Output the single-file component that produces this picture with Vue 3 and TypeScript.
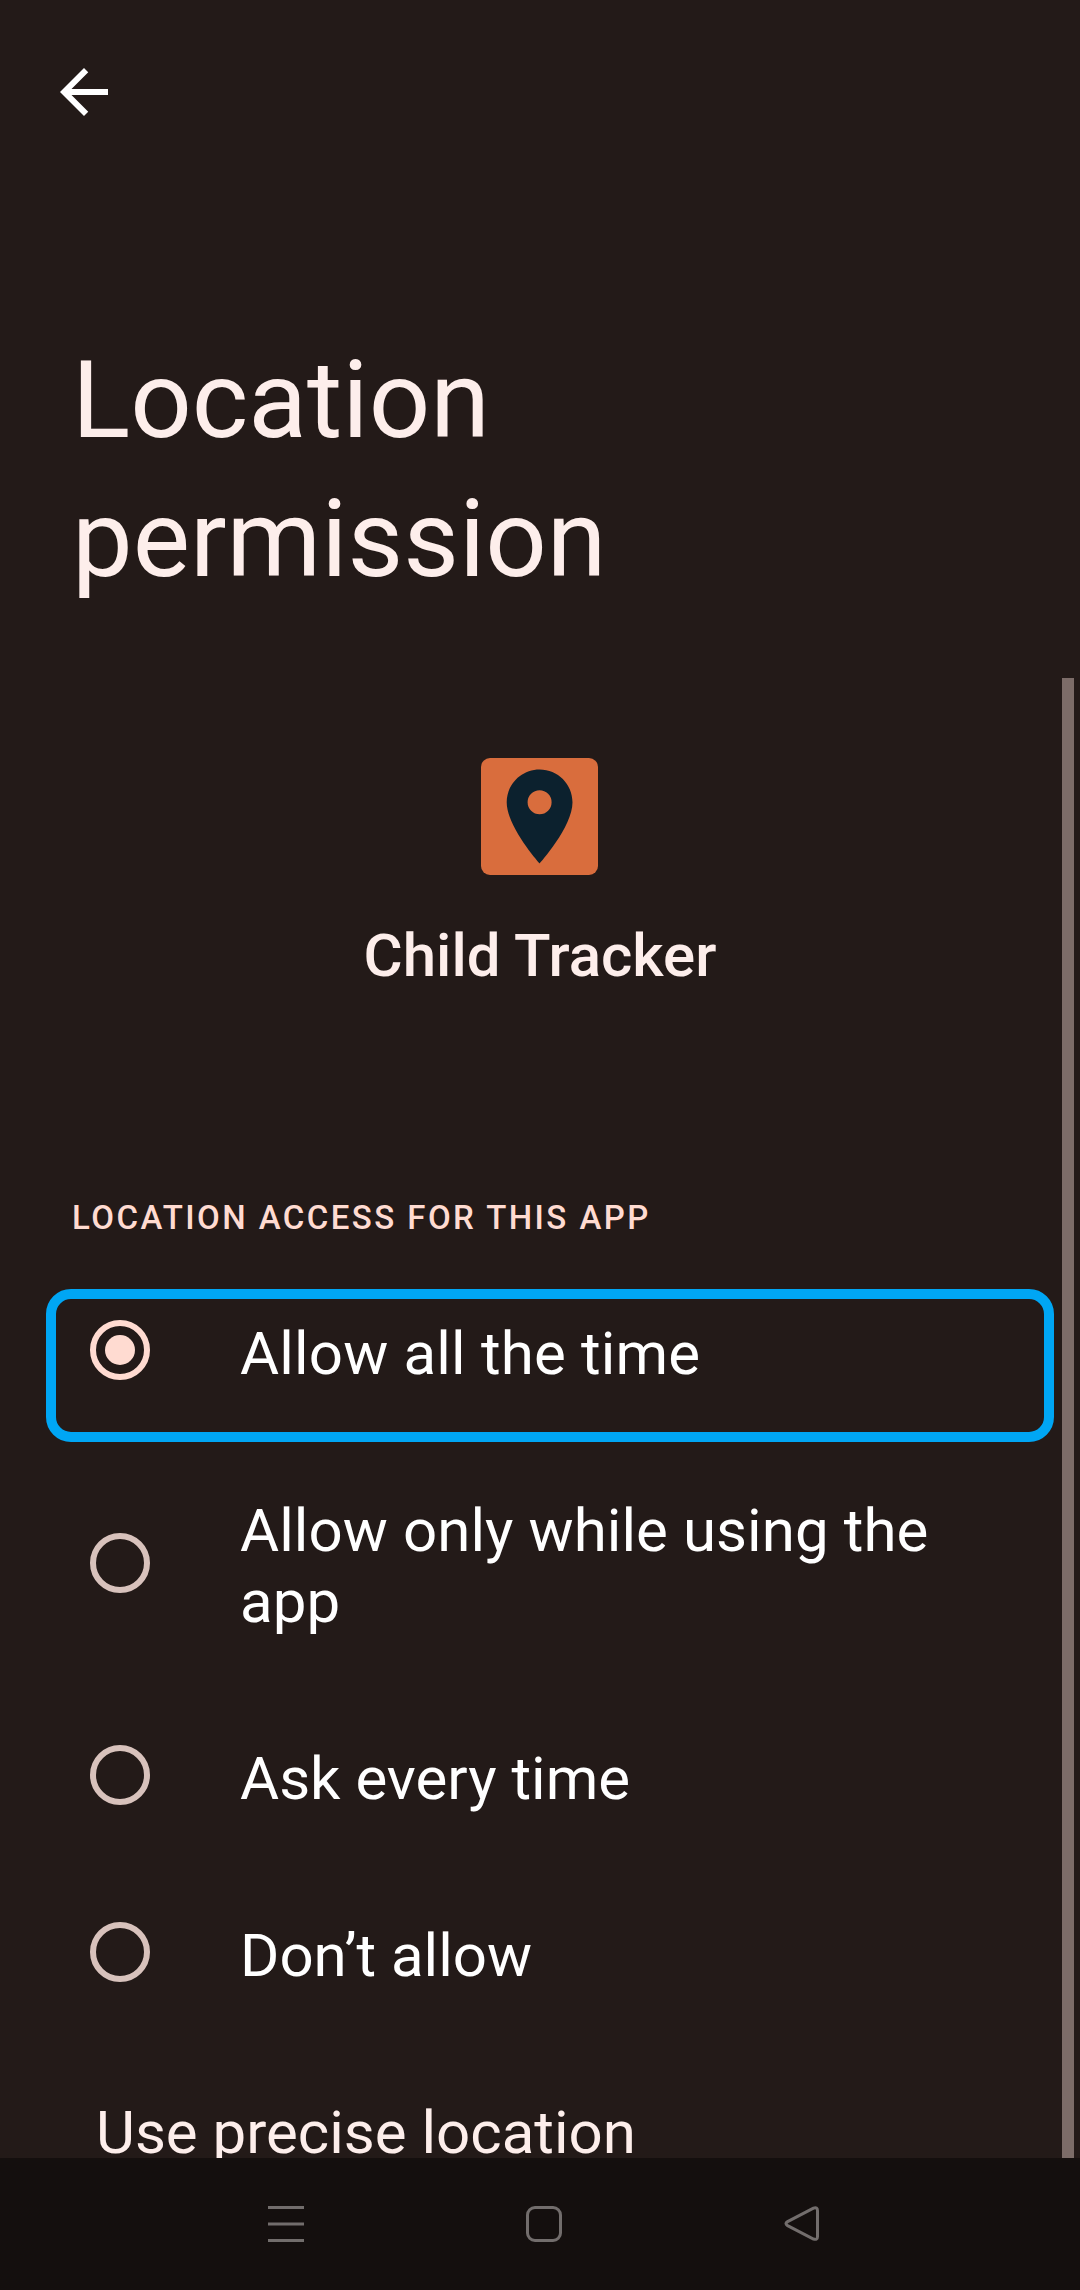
<script setup lang="ts">
import { ref } from 'vue'

interface Option {
  id: string
  label: string
  tracking: number
}

const options: Option[] = [
  { id: 'always', label: 'Allow all the time', tracking: 0.17 },
  { id: 'foreground', label: 'Allow only while using the app', tracking: 0.07 },
  { id: 'ask', label: 'Ask every time', tracking: 0 },
  { id: 'deny', label: 'Don’t allow', tracking: 0 },
]

const selected = ref<string>('always')
</script>

<template>
  <div class="screen">
    <main class="content">
      <header class="toolbar">
        <svg class="back" viewBox="0 0 24 24" aria-label="Back">
          <path d="M20 11H7.83l5.59-5.59L12 4l-8 8 8 8 1.41-1.41L7.83 13H20z" />
        </svg>
      </header>

      <h1 class="title">Location<br />permission</h1>

      <section class="app">
        <div class="app-icon">
          <svg viewBox="0 0 117 117">
            <path
              fill-rule="evenodd"
              d="M58.6 11.4C40.4 11.4 25.7 26.1 25.7 44.3C25.7 69 58.6 105.5 58.6 105.5S91.5 69 91.5 44.3C91.5 26.1 76.8 11.4 58.6 11.4zM58.6 56.300a12 12 0 1 1 0-24a12 12 0 0 1 0 24z"
            />
          </svg>
        </div>
        <div class="app-name">Child Tracker</div>
      </section>

      <h2 class="section-title">LOCATION ACCESS FOR THIS APP</h2>

      <ul class="options">
        <li v-for="option in options" :key="option.id" class="option" @click="selected = option.id">
          <span class="radio" :class="{ checked: selected === option.id }"></span>
          <span class="label" :style="{ letterSpacing: option.tracking + 'px' }">{{ option.label }}</span>
          <span v-if="option.id === 'always'" class="highlight"></span>
        </li>
      </ul>

      <div class="precise">Use precise location</div>
      <div class="scrollbar"></div>
    </main>

    <nav class="navbar">
      <svg class="nav-icon recents" viewBox="0 0 36 36">
        <path d="M0 1.500H36M0 18H36M0 34.500H36" />
      </svg>
      <svg class="nav-icon home" viewBox="0 0 36 36">
        <rect x="1.500" y="1.500" width="33" height="33" rx="7.500" />
      </svg>
      <svg class="nav-icon return" viewBox="0 0 36 36">
        <path d="M29.500 2.200L3.600 15.600Q.3 17.600 3.600 19.600L29.500 33Q33.500 34.400 33.500 30.500V4.700Q33.500 .8 29.500 2.200z" />
      </svg>
    </nav>
  </div>
</template>

<style>
body {
  margin: 0;
  background: #231a18;
}
</style>

<style scoped>
.screen {
  display: flex;
  flex-direction: column;
  width: 1080px;
  height: 2290px;
  overflow: hidden;
  background: #231a18;
  font-family: Roboto, 'Liberation Sans', sans-serif;
}

.content {
  position: relative;
  flex: none;
  height: 2158px;
  overflow: hidden;
}

.toolbar {
  height: 331px;
  padding: 56px 48px 0;
  box-sizing: border-box;
}

.back {
  display: block;
  width: 72px;
  height: 72px;
  fill: #fff;
}

.title {
  margin: 0 72px;
  height: 279px;
  color: #fdeeeb;
  font-size: 108px;
  font-weight: 400;
  line-height: 139px;
}

.app {
  display: flex;
  flex-direction: column;
  align-items: center;
  padding-top: 147.700px;
  height: 588px;
  box-sizing: border-box;
}

.app-icon {
  width: 117px;
  height: 117px;
  margin-right: 2px;
  border-radius: 9px;
  background: #d96d3d;
}

.app-icon svg {
  display: block;
  width: 117px;
  height: 117px;
  fill: #0c212e;
}

.app-name {
  margin-top: 46.300px;
  color: #fdeeeb;
  font-size: 60px;
  font-weight: 500;
  line-height: 70px;
}

.section-title {
  margin: 0 72px;
  height: 67px;
  color: #ffdbd1;
  font-size: 33px;
  font-weight: 500;
  letter-spacing: 2.440px;
  line-height: 40px;
}

.options {
  margin: 0;
  padding: 0;
  list-style: none;
}

.option {
  position: relative;
  display: flex;
  align-items: center;
  gap: 90px;
  padding: 53px 72px 53px 90px;
}

.radio {
  display: flex;
  flex: none;
  align-items: center;
  justify-content: center;
  width: 60px;
  height: 60px;
  margin-bottom: 7px;
  box-sizing: border-box;
  border: 6px solid #d8c2bc;
  border-radius: 50%;
}

.radio.checked {
  border-color: #ffdbd1;
}

.radio.checked::after {
  content: '';
  width: 30px;
  height: 30px;
  border-radius: 50%;
  background: #ffdbd1;
}

.label {
  color: #fff;
  font-size: 60px;
  line-height: 71px;
}

/* Callout frame drawn around the recommended choice */
.highlight {
  position: absolute;
  top: 24px;
  left: 46px;
  width: 1008px;
  height: 153px;
  box-sizing: border-box;
  border: 10px solid #00a6f4;
  border-radius: 25px;
}

.precise {
  margin: 53px 0 0 96px;
  color: #fdeeeb;
  font-size: 60px;
  line-height: 71px;
  white-space: nowrap;
}

.scrollbar {
  position: absolute;
  top: 678px;
  right: 6px;
  bottom: 0;
  width: 12px;
  background: #7c6c68;
}

.navbar {
  display: flex;
  height: 132px;
  padding: 48px 0 0 268px;
  box-sizing: border-box;
  background: #140f0e;
}

.nav-icon {
  width: 36px;
  height: 36px;
  fill: none;
  stroke: #726d6c;
  stroke-width: 3;
}

.home {
  margin-left: 222px;
}

.return {
  margin-left: 222px;
}
</style>
